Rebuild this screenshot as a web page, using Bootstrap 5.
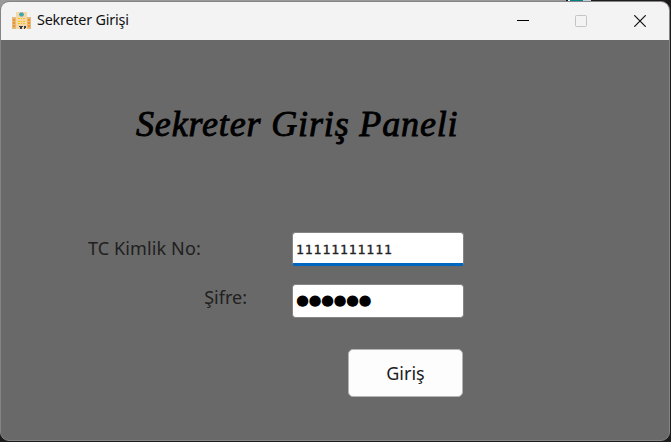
<!DOCTYPE html>
<html lang="tr">
<head>
<meta charset="utf-8">
<meta name="viewport" content="width=device-width, initial-scale=1">
<title>Sekreter Girişi</title>
<link rel="stylesheet" href="https://cdn.jsdelivr.net/npm/bootstrap@5.3.0/dist/css/bootstrap.min.css">
<style>
body{height:442px;padding:1px 1px 1px 0;background:linear-gradient(90deg,#999 0 566px,#111 566px 568px,#dff 568px 570px,#008080 570px 583px,#c5cfda 583px 591px,#1c1a1a 591px) 0 0/671px 12px no-repeat,linear-gradient(#999 0 368px,#1c1a1a 368px) 0 0/10px 442px no-repeat,#1c1a1a;font-family:"Noto Sans",sans-serif;color:#000}
.app-window{height:440px;border:1px solid #858585;border-radius:9px;background:#696969}
.title-strip{height:38px;background:#f3f3f3;padding-left:11px;font-size:14.4px}
.title-strip svg{display:block}
.win-name{margin-left:6px;letter-spacing:-.22px;line-height:20px;padding-bottom:2px;color:#111}
.app-icon{margin-bottom:2px}
.win-btn{width:58.5px;height:38px}
.login-area{padding:60px 0 0 87px}
.panel-heading{margin:0 0 0 48px;font:italic 36px/48px "Liberation Serif",serif;letter-spacing:.85px;-webkit-text-stroke:.9px #000;white-space:nowrap}
.login-form{width:376px;padding-top:84px}
.field-label{font-size:18px;line-height:24px;color:#202020;white-space:nowrap}
.label-id{letter-spacing:.12px;padding-bottom:2px}
.label-pass{margin-right:45px;padding-bottom:8px}
.entry{width:172px;height:34px;min-height:0;border:1px solid #858585;border-radius:3px;padding:0 3px;color:#222}
.entry:focus{box-shadow:none}
.entry-id{border-bottom:3px solid #0067c0;padding-top:2px;font:13px/20px "DejaVu Sans Mono",monospace;letter-spacing:.97px;-webkit-text-stroke:.35px #222}
.row-pass{margin-top:18px}
.entry-pass{color:#000;font:15px/20px "DejaVu Sans",sans-serif;letter-spacing:-.6px;padding-bottom:2px}
.enter-btn{width:115px;height:48px;margin:31px 1px 0 0;border:1px solid #b4b4b4;border-radius:5px;background:#fdfdfd;color:#202020;font-size:18px;padding:0}
</style>
<script src="https://cdn.jsdelivr.net/npm/bootstrap@5.3.0/dist/js/bootstrap.bundle.min.js"></script>
</head>
<body class="overflow-hidden m-0">
<main class="app-window overflow-hidden">
 <header class="title-strip d-flex align-items-center">
  <svg class="app-icon" width="19" height="19" viewBox="0 0 19 19" aria-hidden="true"><path fill="#e0bb7d" d="M0 6h5v12H0zM14 6h5v12h-5z"/><path fill="#f5d8a5" d="M4 1h11v17H4z"/><path fill="#f29224" d="M1 8h2v2H1zm0 3h2v2H1zm0 3h2v2H1zM16 8h2v2h-2zm0 3h2v2h-2zm0 3h2v2h-2z"/><path fill="#39a8b4" d="M8 1.5h3v1h1v2h-1v1H8v-1H7v-2h1z"/><path fill="#f6c51e" d="M6 7h2v1H6zm3 0h1v1H9zm2 0h2v1h-2zM6 10h2v1H6zm3 0h1v1H9zm2 0h2v1h-2zM6 12h2v1H6zm3 0h1v1H9zm2 0h2v1h-2z"/><path fill="#34404a" d="M7 15h4v1h-1v2H8v-2H7zM12 15h2v2h-1v1h-1z"/></svg>
  <span class="win-name">Sekreter Girişi</span>
  <div class="d-flex ms-auto">
   <span class="win-btn d-flex align-items-center justify-content-center"><svg width="12" height="12"><path d="M0 5.5h12" stroke="#000"/></svg></span>
   <span class="win-btn d-flex align-items-center justify-content-center"><svg width="12" height="12"><rect x=".5" y=".5" width="11" height="11" rx="1" fill="none" stroke="#c4c4c4"/></svg></span>
   <span class="win-btn d-flex align-items-center justify-content-center"><svg width="12" height="12"><path d="M.3.3l11.4 11.4M11.7.3L.3 11.7" stroke="#111" stroke-width="1.2"/></svg></span>
  </div>
 </header>
 <section class="login-area">
  <h1 class="panel-heading">Sekreter Giriş Paneli</h1>
  <form class="login-form d-flex flex-column">
   <div class="d-flex justify-content-between align-items-center"><label class="field-label label-id" for="tc">TC Kimlik No:</label><input id="tc" class="form-control entry entry-id" value="11111111111"></div>
   <div class="row-pass d-flex justify-content-end align-items-center"><label class="field-label label-pass" for="sifre">Şifre:</label><input id="sifre" class="form-control entry entry-pass" value="●●●●●●"></div>
   <button type="button" class="btn enter-btn align-self-end">Giriş</button>
  </form>
 </section>
</main>
</body>
</html>
